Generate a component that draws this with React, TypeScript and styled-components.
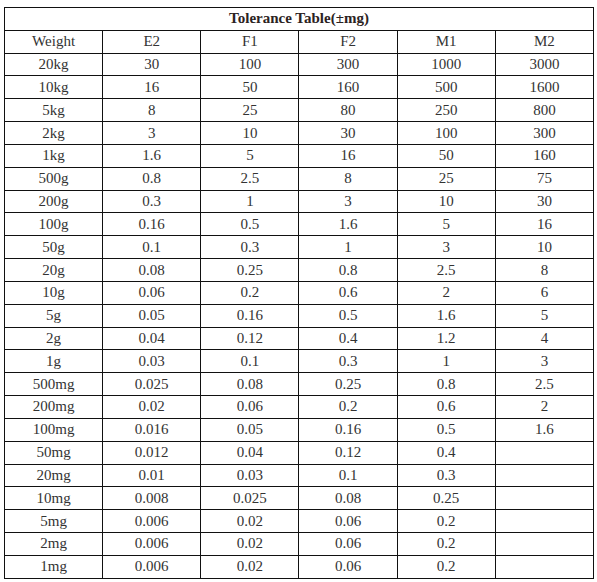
import styled, { createGlobalStyle } from "styled-components"

const GlobalStyle = createGlobalStyle`
  body {
    margin: 0;
    background: #fff;
  }
`

const Page = styled.div`
  padding: 7px 0 0 4px;
`

const Table = styled.table`
  width: 590px;
  height: 572px;
  table-layout: fixed;
  border-collapse: collapse;
  font-family: "Liberation Serif", "Times New Roman", serif;
  font-size: 15px;
  color: #333;
`

const Cell = styled.td<{ $title?: boolean }>`
  border: 1px solid #111;
  text-align: center;
  vertical-align: middle;
  padding: 0;
  line-height: 1;
  font-weight: ${(p) => (p.$title ? "bold" : "normal")};
  color: ${(p) => (p.$title ? "#2b2222" : "#333")};
`

const grades = ["E2", "F1", "F2", "M1", "M2"]

const rows: string[][] = [
  ["20kg", "30", "100", "300", "1000", "3000"],
  ["10kg", "16", "50", "160", "500", "1600"],
  ["5kg", "8", "25", "80", "250", "800"],
  ["2kg", "3", "10", "30", "100", "300"],
  ["1kg", "1.6", "5", "16", "50", "160"],
  ["500g", "0.8", "2.5", "8", "25", "75"],
  ["200g", "0.3", "1", "3", "10", "30"],
  ["100g", "0.16", "0.5", "1.6", "5", "16"],
  ["50g", "0.1", "0.3", "1", "3", "10"],
  ["20g", "0.08", "0.25", "0.8", "2.5", "8"],
  ["10g", "0.06", "0.2", "0.6", "2", "6"],
  ["5g", "0.05", "0.16", "0.5", "1.6", "5"],
  ["2g", "0.04", "0.12", "0.4", "1.2", "4"],
  ["1g", "0.03", "0.1", "0.3", "1", "3"],
  ["500mg", "0.025", "0.08", "0.25", "0.8", "2.5"],
  ["200mg", "0.02", "0.06", "0.2", "0.6", "2"],
  ["100mg", "0.016", "0.05", "0.16", "0.5", "1.6"],
  ["50mg", "0.012", "0.04", "0.12", "0.4", ""],
  ["20mg", "0.01", "0.03", "0.1", "0.3", ""],
  ["10mg", "0.008", "0.025", "0.08", "0.25", ""],
  ["5mg", "0.006", "0.02", "0.06", "0.2", ""],
  ["2mg", "0.006", "0.02", "0.06", "0.2", ""],
  ["1mg", "0.006", "0.02", "0.06", "0.2", ""],
]

export default function App() {
  return (
    <Page>
      <GlobalStyle />
      <Table>
        <tbody>
          <tr>
            <Cell $title colSpan={6}>
              Tolerance Table(±mg)
            </Cell>
          </tr>
          <tr>
            <Cell>Weight</Cell>
            {grades.map((g) => (
              <Cell key={g}>{g}</Cell>
            ))}
          </tr>
          {rows.map((r) => (
            <tr key={r[0]}>
              {r.map((v, i) => (
                <Cell key={i}>{v}</Cell>
              ))}
            </tr>
          ))}
        </tbody>
      </Table>
    </Page>
  )
}
